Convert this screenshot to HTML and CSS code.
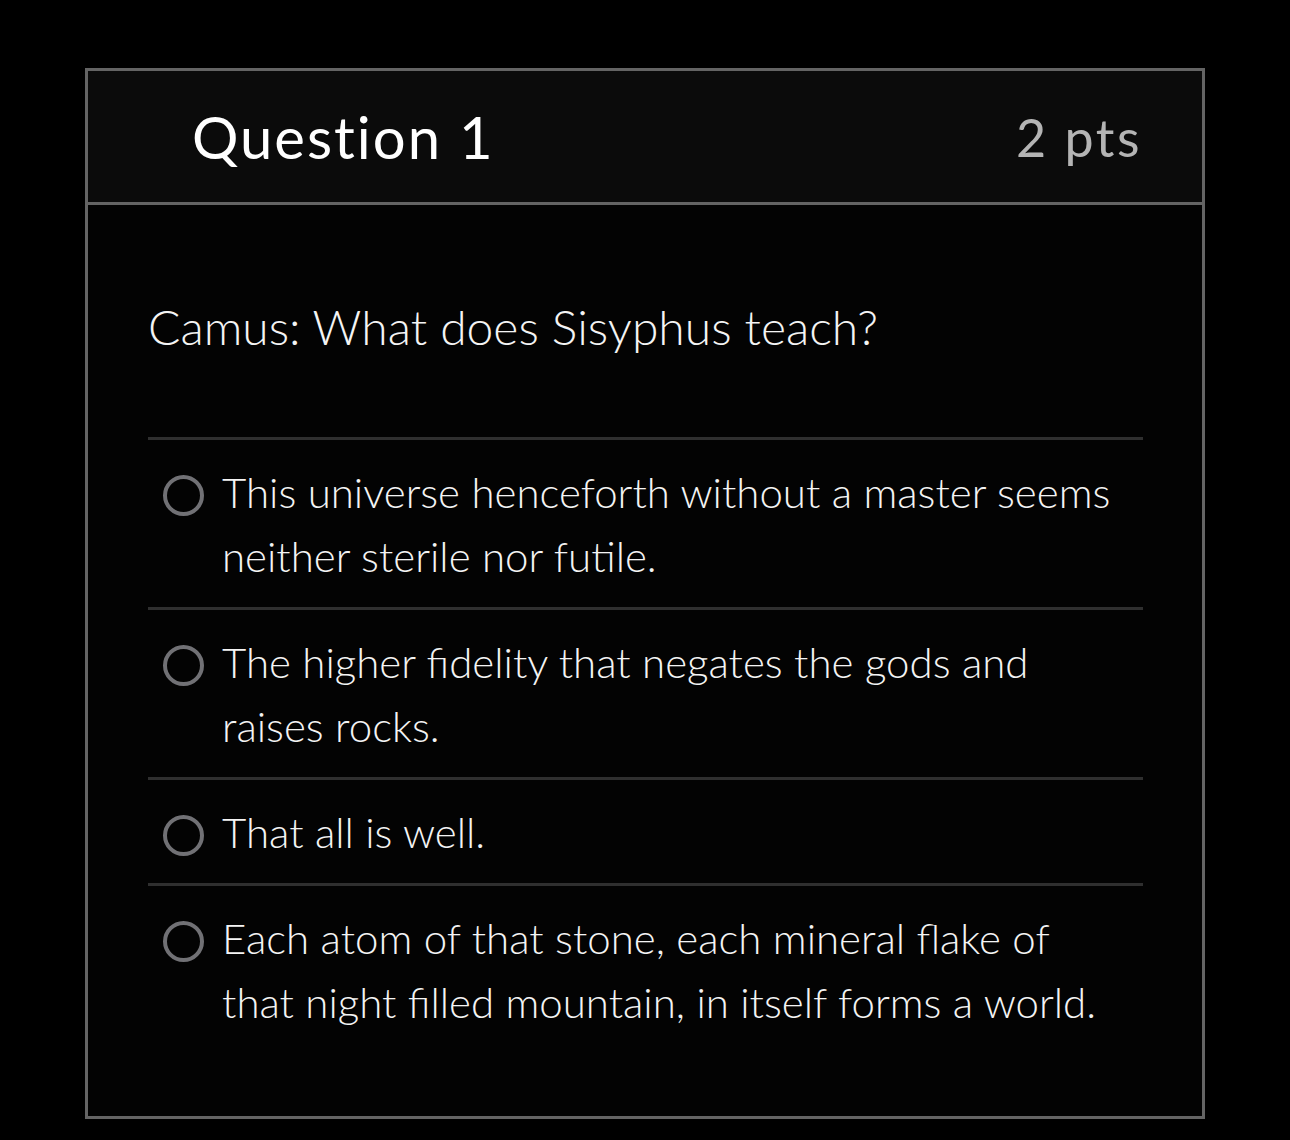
FILE: index.html
```html
<!DOCTYPE html>
<html lang="en">
<head>
<meta charset="utf-8">
<title>Question 1</title>
<link rel="stylesheet" href="styles.css">
</head>
<body>
<div class="card">
  <div class="card-header">
    <h2 class="title">Question 1</h2>
    <span class="points">2 pts</span>
  </div>
  <div class="card-body">
    <p class="question">Camus: What does Sisyphus teach?</p>
    <ul class="answers">
      <li class="answer"><span class="radio"></span><span class="answer-text">This universe henceforth without a master seems neither sterile nor futile.</span></li>
      <li class="answer"><span class="radio"></span><span class="answer-text">The higher fidelity that negates the gods and raises rocks.</span></li>
      <li class="answer"><span class="radio"></span><span class="answer-text">That all is well.</span></li>
      <li class="answer"><span class="radio"></span><span class="answer-text">Each atom of that stone, each mineral flake of that night filled mountain, in itself forms a world.</span></li>
    </ul>
  </div>
</div>
</body>
</html>
```
FILE: styles.css
```css
html, body {
  margin: 0;
  padding: 0;
  background: #000;
}
body {
  font-family: Lato, "Noto Sans", sans-serif;
  color: #fff;
  padding: 68px 0 0 85px;
  height: 1140px;
  box-sizing: border-box;
}
.card {
  width: 1120px;
  box-sizing: border-box;
  border: 3px solid #646464;
  background: #030303;
}
.card-header {
  background: #0b0b0b;
  border-bottom: 3px solid #646464;
  height: 134px;
  box-sizing: border-box;
  display: flex;
  align-items: center;
  justify-content: space-between;
  padding: 0 60px 0 104px;
}
.title {
  margin: 0;
  font-size: 58px;
  font-weight: 400;
  letter-spacing: 2px;
  color: #fff;
}
.points {
  font-size: 52px;
  font-weight: 400;
  color: #b4b4b4;
  letter-spacing: 2.5px;
}
.card-body {
  padding: 0 59px 0 60px;
  height: 911px;
  box-sizing: border-box;
}
.question {
  margin: 0;
  padding: 92px 0 80px;
  font-family: "Lato Light", Lato, sans-serif;
  font-size: 48px;
  font-weight: 300;
  line-height: 60px;
  color: #f4f4f4;
  border-bottom: 3px solid #2f2f2f;
}
.answers {
  list-style: none;
  margin: 0;
  padding: 0;
}
.answer {
  display: flex;
  align-items: flex-start;
  gap: 18px;
  padding: 20px 22px 19px 15px;
  border-bottom: 3px solid #2f2f2f;
  font-family: "Lato Light", Lato, sans-serif;
  font-size: 42px;
  font-weight: 300;
  line-height: 64px;
  color: #f4f4f4;
}
.answer:last-child {
  border-bottom: none;
}
.radio {
  flex: none;
  width: 33px;
  height: 33px;
  border: 4px solid #717175;
  border-radius: 50%;
  margin-top: 15px;
}
.answer-text {
  flex: 1;
}
```
